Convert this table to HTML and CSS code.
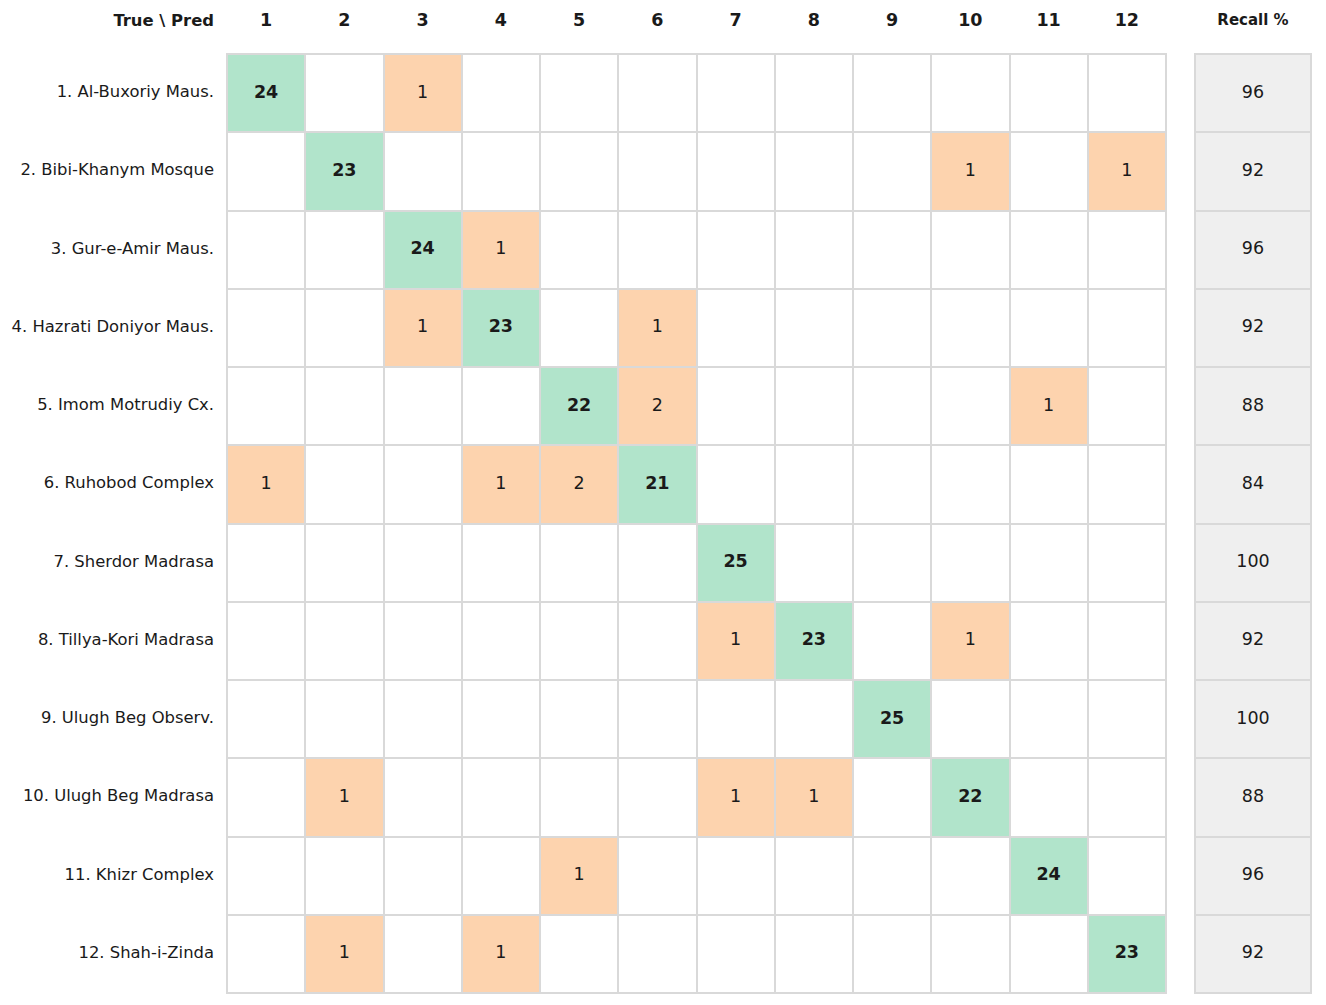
FILE: index.html
```html
<!DOCTYPE html>
<html>
<head>
<meta charset="utf-8">
<link rel="stylesheet" href="styles.css">
</head>
<body>
<div class="page">
  <div class="head">
    <div class="corner">True \ Pred</div>
    <div class="colnums">
      <span>1</span><span>2</span><span>3</span><span>4</span><span>5</span><span>6</span>
      <span>7</span><span>8</span><span>9</span><span>10</span><span>11</span><span>12</span>
    </div>
    <div class="rhead">Recall %</div>
  </div>
  <div class="body">
    <div class="labels">
      <div>1. Al-Buxoriy Maus.</div>
      <div>2. Bibi-Khanym Mosque</div>
      <div>3. Gur-e-Amir Maus.</div>
      <div>4. Hazrati Doniyor Maus.</div>
      <div>5. Imom Motrudiy Cx.</div>
      <div>6. Ruhobod Complex</div>
      <div>7. Sherdor Madrasa</div>
      <div>8. Tillya-Kori Madrasa</div>
      <div>9. Ulugh Beg Observ.</div>
      <div>10. Ulugh Beg Madrasa</div>
      <div>11. Khizr Complex</div>
      <div>12. Shah-i-Zinda</div>
    </div>
    <div class="matrix">
      <!-- row 1 -->
      <div class="d">24</div><div></div><div class="e">1</div><div></div><div></div><div></div><div></div><div></div><div></div><div></div><div></div><div></div>
      <!-- row 2 -->
      <div></div><div class="d">23</div><div></div><div></div><div></div><div></div><div></div><div></div><div></div><div class="e">1</div><div></div><div class="e">1</div>
      <!-- row 3 -->
      <div></div><div></div><div class="d">24</div><div class="e">1</div><div></div><div></div><div></div><div></div><div></div><div></div><div></div><div></div>
      <!-- row 4 -->
      <div></div><div></div><div class="e">1</div><div class="d">23</div><div></div><div class="e">1</div><div></div><div></div><div></div><div></div><div></div><div></div>
      <!-- row 5 -->
      <div></div><div></div><div></div><div></div><div class="d">22</div><div class="e">2</div><div></div><div></div><div></div><div></div><div class="e">1</div><div></div>
      <!-- row 6 -->
      <div class="e">1</div><div></div><div></div><div class="e">1</div><div class="e">2</div><div class="d">21</div><div></div><div></div><div></div><div></div><div></div><div></div>
      <!-- row 7 -->
      <div></div><div></div><div></div><div></div><div></div><div></div><div class="d">25</div><div></div><div></div><div></div><div></div><div></div>
      <!-- row 8 -->
      <div></div><div></div><div></div><div></div><div></div><div></div><div class="e">1</div><div class="d">23</div><div></div><div class="e">1</div><div></div><div></div>
      <!-- row 9 -->
      <div></div><div></div><div></div><div></div><div></div><div></div><div></div><div></div><div class="d">25</div><div></div><div></div><div></div>
      <!-- row 10 -->
      <div></div><div class="e">1</div><div></div><div></div><div></div><div></div><div class="e">1</div><div class="e">1</div><div></div><div class="d">22</div><div></div><div></div>
      <!-- row 11 -->
      <div></div><div></div><div></div><div></div><div class="e">1</div><div></div><div></div><div></div><div></div><div></div><div class="d">24</div><div></div>
      <!-- row 12 -->
      <div></div><div class="e">1</div><div></div><div class="e">1</div><div></div><div></div><div></div><div></div><div></div><div></div><div></div><div class="d">23</div>
    </div>
    <div class="recall">
      <div>96</div><div>92</div><div>96</div><div>92</div><div>88</div><div>84</div>
      <div>100</div><div>92</div><div>100</div><div>88</div><div>96</div><div>92</div>
    </div>
  </div>
</div>
</body>
</html>
```
FILE: styles.css
```css
html, body {
  margin: 0;
  padding: 0;
  background: #ffffff;
}
body {
  font-family: "DejaVu Sans", "Liberation Sans", sans-serif;
  font-size: 16.4px;
  color: #1a1a1a;
}
.page {
  width: 1326px;
  height: 1005px;
}
.head {
  display: flex;
  height: 53px;
  font-weight: bold;
}
.corner {
  width: 226px;
  box-sizing: border-box;
  padding-right: 12px;
  text-align: right;
  line-height: 41px;
}
.colnums {
  width: 941px;
  box-sizing: border-box;
  padding: 0 2px;
  display: grid;
  grid-template-columns: repeat(12, 1fr);
  column-gap: 2px;
  line-height: 41px;
  text-align: center;
  font-size: 17.5px;
}
.rhead {
  width: 118px;
  margin-left: 27px;
  text-align: center;
  line-height: 41px;
  font-size: 15px;
}
.body {
  display: flex;
}
.labels,
.matrix,
.recall {
  height: 941px;
  box-sizing: border-box;
  padding: 2px;
  display: grid;
  grid-template-rows: repeat(12, 1fr);
  gap: 2px;
}
.labels {
  width: 226px;
  padding-right: 12px;
}
.labels > div,
.matrix > div,
.recall > div {
  display: flex;
  align-items: center;
  padding-bottom: 3px;
}
.labels > div {
  justify-content: flex-end;
}
.matrix {
  width: 941px;
  grid-template-columns: repeat(12, 1fr);
  background: #d9d9d9;
  font-size: 17.5px;
}
.matrix > div {
  background: #ffffff;
  justify-content: center;
}
.matrix > .d {
  background: #b1e4cb;
  font-weight: bold;
}
.matrix > .e {
  background: #fdd3ae;
}
.recall {
  width: 118px;
  margin-left: 27px;
  background: #d9d9d9;
  font-size: 17.5px;
}
.recall > div {
  background: #efefef;
  justify-content: center;
}
```
